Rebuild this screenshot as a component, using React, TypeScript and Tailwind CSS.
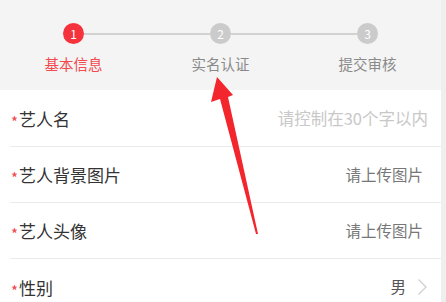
import React from "react";

const steps = ["基本信息", "实名认证", "提交审核"];

type Row = { label: string; value: string; kind: "placeholder" | "upload" | "select" };

const rows: Row[] = [
  { label: "艺人名", value: "请控制在30个字以内", kind: "placeholder" },
  { label: "艺人背景图片", value: "请上传图片", kind: "upload" },
  { label: "艺人头像", value: "请上传图片", kind: "upload" },
  { label: "性别", value: "男", kind: "select" },
];

function Stepper() {
  return (
    <div className="shrink-0 h-[90px] bg-[#f4f4f4] grid grid-cols-3 pt-[23px]">
      {steps.map((s, i) => (
        <div key={s} className="flex flex-col items-center">
          <div className="flex items-center w-full">
            <div className={`flex-1 h-[2px] ${i === 0 ? "" : "bg-[#d2d2d2]"}`} />
            <div
              className={`w-[21px] h-[21px] rounded-full flex items-center justify-center text-white text-[12px] leading-none ${
                i === 0 ? "bg-[#f5333c]" : "bg-[#cbcbcb]"
              }`}
            >
              {i + 1}
            </div>
            <div className={`flex-1 h-[2px] ${i === 2 ? "" : "bg-[#d2d2d2]"}`} />
          </div>
          <div
            className={`mt-[12px] text-[14.5px] leading-[16px] ${
              i === 0 ? "text-[#f24a4f]" : "text-[#8a8a8a]"
            }`}
          >
            {s}
          </div>
        </div>
      ))}
    </div>
  );
}

function FormRow({ row, last }: { row: Row; last: boolean }) {
  return (
    <div
      className={`shrink-0 ml-[10px] h-[56px] flex items-center ${last ? "" : "border-b border-[#ececec]"}`}
    >
      <span className="text-[#f2404a] text-[15px] leading-none pl-[1px] w-[9px] mt-[6px]">*</span>
      <span className="text-[17px] text-[#333] leading-none flex-1">{row.label}</span>
      {row.kind === "placeholder" && (
        <span className="text-[16.5px] text-[#c8c8c8] leading-none pr-[13px]">{row.value}</span>
      )}
      {row.kind === "upload" && (
        <span className="text-[15.5px] text-[#777] leading-none pr-[18px]">{row.value}</span>
      )}
      {row.kind === "select" && (
        <div className="flex items-center pr-[13px]">
          <span className="text-[15.5px] text-[#555] leading-none">{row.value}</span>
          <svg width="11" height="18" viewBox="0 0 11 18" className="ml-[11px]">
            <path d="M1.5 1.5 L9 9 L1.5 16.5" fill="none" stroke="#cfcfcf" strokeWidth="1.3" />
          </svg>
        </div>
      )}
    </div>
  );
}

export default function App() {
  return (
    <div
      className="relative w-[446px] h-[302px] overflow-hidden flex bg-white"
      style={{ fontFamily: '"Noto Sans CJK SC", "Noto Sans", sans-serif' }}
    >
      <main className="flex-1 flex flex-col">
        <Stepper />
        <div className="shrink-0 bg-white pt-[1px] flex flex-col">
          {rows.map((r, i) => (
            <FormRow key={r.label} row={r} last={i === rows.length - 1} />
          ))}
        </div>
      </main>
      <div className="w-[5px] bg-[#efefef]" />
      {/* annotation arrow */}
      <svg className="absolute left-0 top-0 pointer-events-none" width="446" height="302">
        <polygon
          points="217,77 233,95 228,97 258,234 256,234 220,99 211,102"
          fill="#f2262c"
        />
      </svg>
    </div>
  );
}
